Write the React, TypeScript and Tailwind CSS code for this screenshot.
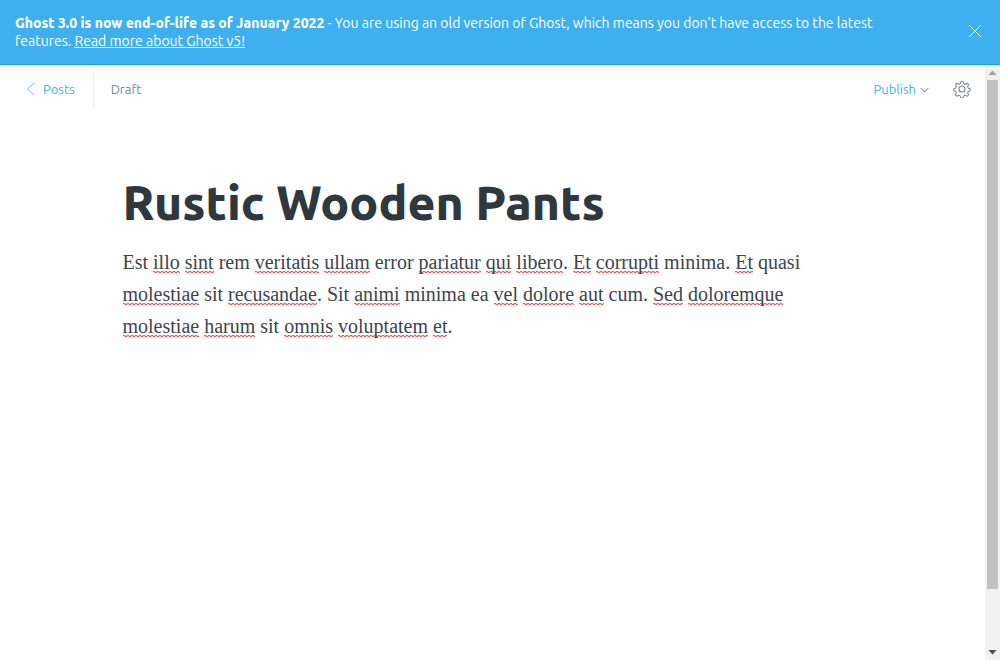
import type { ReactNode } from 'react';

const body =
  'Est *illo* *sint* rem *veritatis* *ullam* error *pariatur* *qui* *libero*. *Et* *corrupti* minima. *Et* quasi *molestiae* sit *recusandae*. Sit *animi* minima ea *vel* *dolore* *aut* cum. *Sed* *doloremque* *molestiae* *harum* sit *omnis* *voluptatem* *et*.';

function Misspelt({ children }: { children: ReactNode }) {
  return (
    <span className="bg-[url('data:image/svg+xml,%3Csvg%20xmlns=%22http://www.w3.org/2000/svg%22%20width=%224%22%20height=%222%22%3E%3Cpath%20d=%22M-1%201.5L1%20.5L3%201.5L5%20.5%22%20fill=%22none%22%20stroke=%22%23ff1a1a%22%20stroke-width=%221%22/%3E%3C/svg%3E')] bg-bottom-left bg-repeat-x">
      {children}
    </span>
  );
}

function Banner() {
  return (
    <aside className="flex shrink-0 items-start justify-between border-b border-[#1a9ded] bg-[#3eb0ef] pt-3.5 pr-[18px] pb-3.5 pl-[15px] text-white">
      <p className="max-w-[910px] text-[14px] leading-[18px]">
        <strong className="font-extrabold">Ghost 3.0 is now end-of-life as of January 2022</strong> - You are using an
        old version of Ghost, which means you don't have access to the latest features.{' '}
        <a href="#v5" className="underline">
          Read more about Ghost v5!
        </a>
      </p>
      <button type="button" aria-label="Close" className="mt-2.5 shrink-0">
        <svg className="size-3.5" viewBox="0 0 14 14" fill="none" stroke="currentColor" strokeWidth="0.9">
          <path d="M1 1l12 12M13 1L1 13" />
        </svg>
      </button>
    </aside>
  );
}

function Gear() {
  return (
    <svg className="size-[18px]" viewBox="0 0 24 24" fill="none" stroke="#738a94" strokeWidth="1.4" strokeLinejoin="round">
      <path d="M13.6 2.6l.5 1.5a2.1 2.1 0 0 0 2.8 1.2l1.4-.7a1.8 1.8 0 0 1 2.2 2.2l-.7 1.4a2.1 2.1 0 0 0 1.2 2.8l1.2.4a1.8 1.8 0 0 1 0 3.2l-1.2.4a2.1 2.1 0 0 0-1.2 2.8l.7 1.4a1.8 1.8 0 0 1-2.2 2.2l-1.4-.7a2.1 2.1 0 0 0-2.8 1.2l-.5 1.2a1.8 1.8 0 0 1-3.2 0l-.5-1.2a2.1 2.1 0 0 0-2.8-1.2l-1.4.7a1.8 1.8 0 0 1-2.2-2.2l.7-1.4a2.1 2.1 0 0 0-1.2-2.8l-1.2-.4a1.8 1.8 0 0 1 0-3.2l1.2-.4a2.1 2.1 0 0 0 1.2-2.8l-.7-1.4a1.8 1.8 0 0 1 2.2-2.2l1.4.7a2.1 2.1 0 0 0 2.8-1.2l.5-1.5a1.8 1.8 0 0 1 3.2 0z" />
      <circle cx="12" cy="12" r="4" />
    </svg>
  );
}

function Toolbar() {
  return (
    <header className="flex h-12 items-center justify-between pr-3.5 pl-[26px] text-[13px] leading-4">
      <nav className="flex items-center">
        <a href="#posts" className="flex h-9 items-center gap-2 border-r border-[#e5eff5] pr-[18px] text-[#3eb0ef]">
          <svg className="h-3.5 w-[9px]" viewBox="0 0 9 14" fill="none" stroke="currentColor" strokeWidth="0.8">
            <path d="M8 1L1.5 7L8 13" />
          </svg>
          Posts
        </a>
        <span className="pl-[17px] text-[#738a94]">Draft</span>
      </nav>
      <div className="flex items-center gap-6">
        <button type="button" className="flex items-center gap-1 text-[#3eb0ef]">
          Publish
          <svg className="mt-0.5 h-[6px] w-[9px]" viewBox="0 0 9 6" fill="none" stroke="#5a7d90">
            <path d="M.5 .8L4.5 5L8.5 .8" />
          </svg>
        </button>
        <button type="button" aria-label="Settings">
          <Gear />
        </button>
      </div>
    </header>
  );
}

function Scrollbar() {
  return (
    <div aria-hidden="true" className="flex w-[15px] shrink-0 flex-col items-center bg-[#f1f1f1]">
      <svg className="h-[15px] w-[15px] shrink-0" viewBox="0 0 15 15" fill="#a3a3a3">
        <path d="M3.5 10L7.5 5.5L11.5 10z" />
      </svg>
      <div className="w-[11px] grow-[9] basis-0 bg-[#c1c1c1]" />
      <div className="grow basis-0" />
      <svg className="h-3.5 w-[15px] shrink-0" viewBox="0 0 15 14" fill="#505050">
        <path d="M3.5 4L7.5 8.5L11.5 4z" />
      </svg>
    </div>
  );
}

export default function App() {
  return (
    <div className="flex h-screen flex-col bg-white font-['Ubuntu','Noto_Sans',sans-serif]">
      <Banner />
      <div className="flex min-h-0 grow">
        <div className="min-w-0 grow">
          <Toolbar />
          <main className="mx-auto max-w-[740px] pt-[62px]">
            <input
              aria-label="Post title"
              defaultValue="Rustic Wooden Pants"
              spellCheck={false}
              className="block h-[54px] w-full text-[48px] leading-[54px] font-extrabold text-[#2e383e] outline-none"
            />
            <p className="mt-[17px] max-w-[700px] font-['Liberation_Serif',serif] text-[20px] leading-8 text-[#3a464c]">
              {body.split('*').map((part, i) => (i % 2 ? <Misspelt key={i}>{part}</Misspelt> : part))}
            </p>
          </main>
        </div>
        <Scrollbar />
      </div>
    </div>
  );
}
